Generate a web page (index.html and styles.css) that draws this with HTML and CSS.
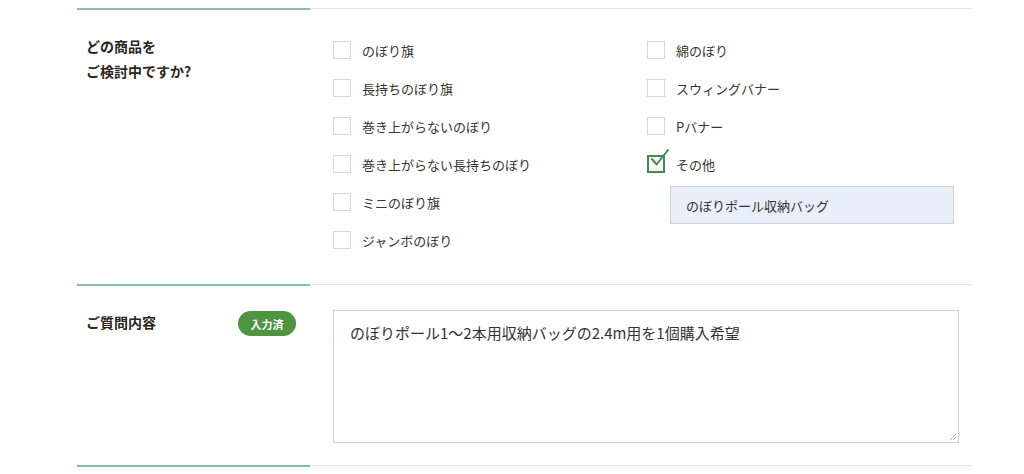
FILE: index.html
```html
<!DOCTYPE html>
<html lang="ja">
<head>
<meta charset="utf-8">
<link rel="stylesheet" href="styles.css">
</head>
<body>
<div class="form">
  <div class="row">
    <div class="head"><p class="label">どの商品を<br>ご検討中ですか?</p></div>
    <div class="body">
      <div class="options">
        <div class="col">
          <label class="opt"><span class="box"></span>のぼり旗</label>
          <label class="opt"><span class="box"></span>長持ちのぼり旗</label>
          <label class="opt"><span class="box"></span>巻き上がらないのぼり</label>
          <label class="opt"><span class="box"></span>巻き上がらない長持ちのぼり</label>
          <label class="opt"><span class="box"></span>ミニのぼり旗</label>
          <label class="opt"><span class="box"></span>ジャンボのぼり</label>
        </div>
        <div class="col">
          <label class="opt"><span class="box"></span>綿のぼり</label>
          <label class="opt"><span class="box"></span>スウィングバナー</label>
          <label class="opt"><span class="box"></span>Pバナー</label>
          <label class="opt"><span class="box checked"><svg class="tick" width="24" height="24" viewBox="0 0 24 24"><path d="M3.5 9.5 L8.5 15.5 L20.5 0.5" fill="none" stroke="#3f8f4e" stroke-width="2"/></svg></span>その他</label>
          <div class="other">のぼりポール収納バッグ</div>
        </div>
      </div>
    </div>
  </div>
  <div class="row">
    <div class="head head-q"><p class="label">ご質問内容</p><span class="badge">入力済</span></div>
    <div class="body body-q">
      <div class="textarea">のぼりポール1〜2本用収納バッグの2.4m用を1個購入希望<svg class="grip" width="8" height="8" viewBox="0 0 8 8"><path d="M7 1 L1 7 M7 4 L4 7" stroke="#b5b5b5" stroke-width="1"/></svg></div>
    </div>
  </div>
  <div class="row end">
    <div class="head"></div>
    <div class="body"></div>
  </div>
</div>
</body>
</html>
```

FILE: styles.css
```css
html, body {
  margin: 0;
  padding: 0;
  background: #fff;
}
body {
  font-family: "Noto Sans CJK JP", "Noto Sans", sans-serif;
  color: #333;
}
.form {
  margin-left: 77px;
  width: 895px;
  padding-top: 8px;
}
.row {
  display: grid;
  grid-template-columns: 233px minmax(0, 1fr);
}
.head {
  border-top: 2px solid #86bfa0;
  padding: 24px 0 0 9px;
}
.body {
  border-top: 1px solid #e2e2e2;
  padding: 32px 13px 35px 23px;
}
.label {
  margin: 0;
  font-size: 14px;
  font-weight: 700;
  line-height: 25px;
  color: #2e241a;
}
.options {
  display: grid;
  grid-template-columns: 314px minmax(0, 1fr);
}
.col {
  display: flex;
  flex-direction: column;
  align-items: flex-start;
  gap: 20px;
}
.opt {
  display: flex;
  align-items: center;
  gap: 11px;
  height: 18px;
  font-size: 13px;
  color: #3a3530;
}
.box {
  position: relative;
  width: 16px;
  height: 16px;
  border: 1px solid #d6d6d6;
  background: #fff;
  flex: none;
}
.box.checked {
  border: 2px solid #3f8f4e;
  width: 14px;
  height: 14px;
}
.tick {
  position: absolute;
  left: -1px;
  top: -8px;
}
.other {
  margin: -7px 0 0 23px;
  height: 36px;
  width: 267px;
  border: 1px solid #cfd3d8;
  background: #e8eff9;
  display: flex;
  align-items: center;
  padding-left: 15px;
  font-size: 13px;
  color: #333;
}
.head-q {
  display: flex;
  align-items: flex-start;
  justify-content: space-between;
  padding-right: 14px;
  padding-top: 24px;
}
.badge {
  margin-top: 1px;
  height: 25px;
  width: 58px;
  border-radius: 13px;
  background: #4e9441;
  color: #fff;
  font-size: 11px;
  font-weight: 700;
  display: flex;
  align-items: center;
  justify-content: center;
}
.body-q {
  padding-top: 25px;
  padding-bottom: 22px;
}
.textarea {
  position: relative;
  height: 104px;
  border: 1px solid #cfcfcf;
  padding: 11px 16px 16px 16px;
  font-size: 15px;
  line-height: 22px;
  color: #333;
}
.grip {
  position: absolute;
  right: 1px;
  bottom: 1px;
}
.end .body, .end .head {
  padding: 0;
  height: 10px;
}
```
